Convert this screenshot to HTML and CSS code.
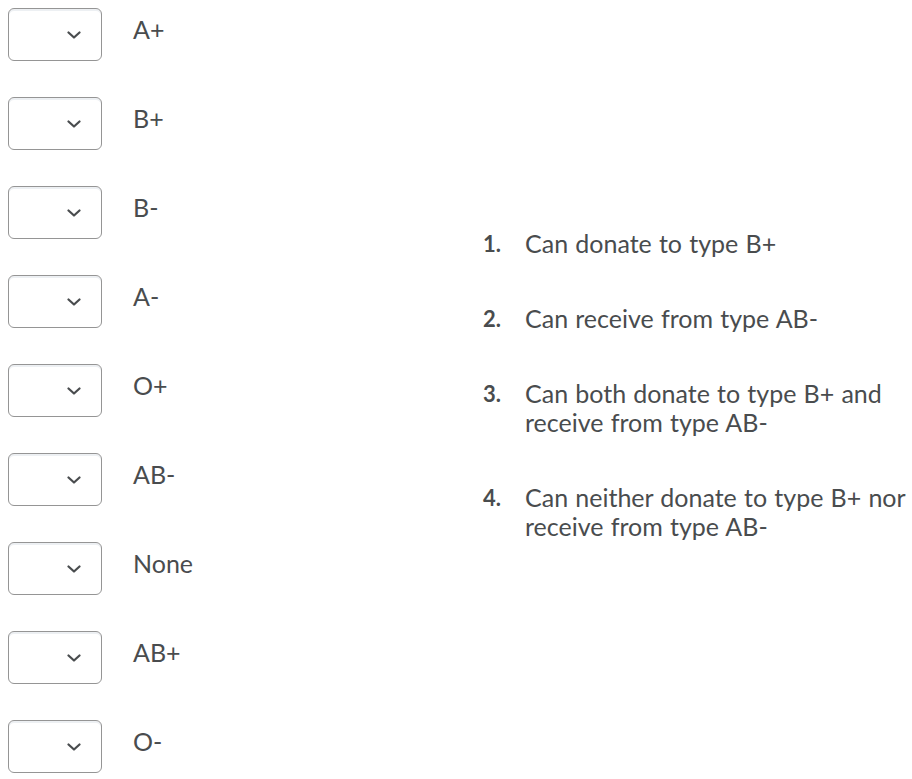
FILE: index.html
```html
<!DOCTYPE html>
<html>
<head>
<meta charset="utf-8">
<link rel="stylesheet" href="styles.css">
</head>
<body>
<div class="page">
  <div class="matches">
    <div class="row"><div class="select"><svg class="chev" viewBox="0 0 14 8" width="14" height="8"><path d="M1.5 1.5 L7 6.5 L12.5 1.5" /></svg></div><span class="label">A+</span></div>
    <div class="row"><div class="select"><svg class="chev" viewBox="0 0 14 8" width="14" height="8"><path d="M1.5 1.5 L7 6.5 L12.5 1.5" /></svg></div><span class="label">B+</span></div>
    <div class="row"><div class="select"><svg class="chev" viewBox="0 0 14 8" width="14" height="8"><path d="M1.5 1.5 L7 6.5 L12.5 1.5" /></svg></div><span class="label">B-</span></div>
    <div class="row"><div class="select"><svg class="chev" viewBox="0 0 14 8" width="14" height="8"><path d="M1.5 1.5 L7 6.5 L12.5 1.5" /></svg></div><span class="label">A-</span></div>
    <div class="row"><div class="select"><svg class="chev" viewBox="0 0 14 8" width="14" height="8"><path d="M1.5 1.5 L7 6.5 L12.5 1.5" /></svg></div><span class="label">O+</span></div>
    <div class="row"><div class="select"><svg class="chev" viewBox="0 0 14 8" width="14" height="8"><path d="M1.5 1.5 L7 6.5 L12.5 1.5" /></svg></div><span class="label">AB-</span></div>
    <div class="row"><div class="select"><svg class="chev" viewBox="0 0 14 8" width="14" height="8"><path d="M1.5 1.5 L7 6.5 L12.5 1.5" /></svg></div><span class="label">None</span></div>
    <div class="row"><div class="select"><svg class="chev" viewBox="0 0 14 8" width="14" height="8"><path d="M1.5 1.5 L7 6.5 L12.5 1.5" /></svg></div><span class="label">AB+</span></div>
    <div class="row"><div class="select"><svg class="chev" viewBox="0 0 14 8" width="14" height="8"><path d="M1.5 1.5 L7 6.5 L12.5 1.5" /></svg></div><span class="label">O-</span></div>
  </div>
  <ol class="choices">
    <li class="choice"><span class="num">1.</span><span class="text">Can donate to type B+</span></li>
    <li class="choice"><span class="num">2.</span><span class="text">Can receive from type AB-</span></li>
    <li class="choice"><span class="num">3.</span><span class="text">Can both donate to type B+ and receive from type AB-</span></li>
    <li class="choice"><span class="num">4.</span><span class="text">Can neither donate to type B+ nor receive from type AB-</span></li>
  </ol>
</div>
</body>
</html>
```
FILE: styles.css
```css
html, body {
  margin: 0;
  padding: 0;
  background: #ffffff;
}
body {
  font-family: Lato, "Open Sans", sans-serif;
  font-size: 25px;
  color: #494c4e;
}
.page {
  display: flex;
  padding: 8px 0 0 8px;
}
.matches {
  width: 475px;
  flex: none;
  display: grid;
  grid-auto-rows: 89px;
}
.row {
  display: flex;
  align-items: flex-start;
}
.select {
  box-sizing: border-box;
  flex: none;
  width: 94px;
  height: 53px;
  border: 1px solid #959595;
  border-radius: 6px;
  box-shadow: inset 0 2px 0 0 rgba(185, 194, 208, 0.25);
  display: flex;
  align-items: center;
  justify-content: flex-end;
  padding-right: 20px;
}
.chev {
  display: block;
  fill: none;
  stroke: #494c4e;
  stroke-width: 2.2;
  stroke-linecap: round;
  stroke-linejoin: round;
}
.label {
  margin-left: 31px;
  padding-top: 7px;
  line-height: 29px;
}
.choices {
  list-style: none;
  margin: 0;
  padding: 221px 0 0 0;
  flex: 1;
  min-width: 0;
  display: flex;
  flex-direction: column;
  gap: 46px;
}
.choice {
  display: grid;
  grid-template-columns: 42px 1fr;
  line-height: 29px;
}
.text {
  word-spacing: 0.8px;
}
.num {
  font-weight: 700;
  font-size: 22px;
}
```
